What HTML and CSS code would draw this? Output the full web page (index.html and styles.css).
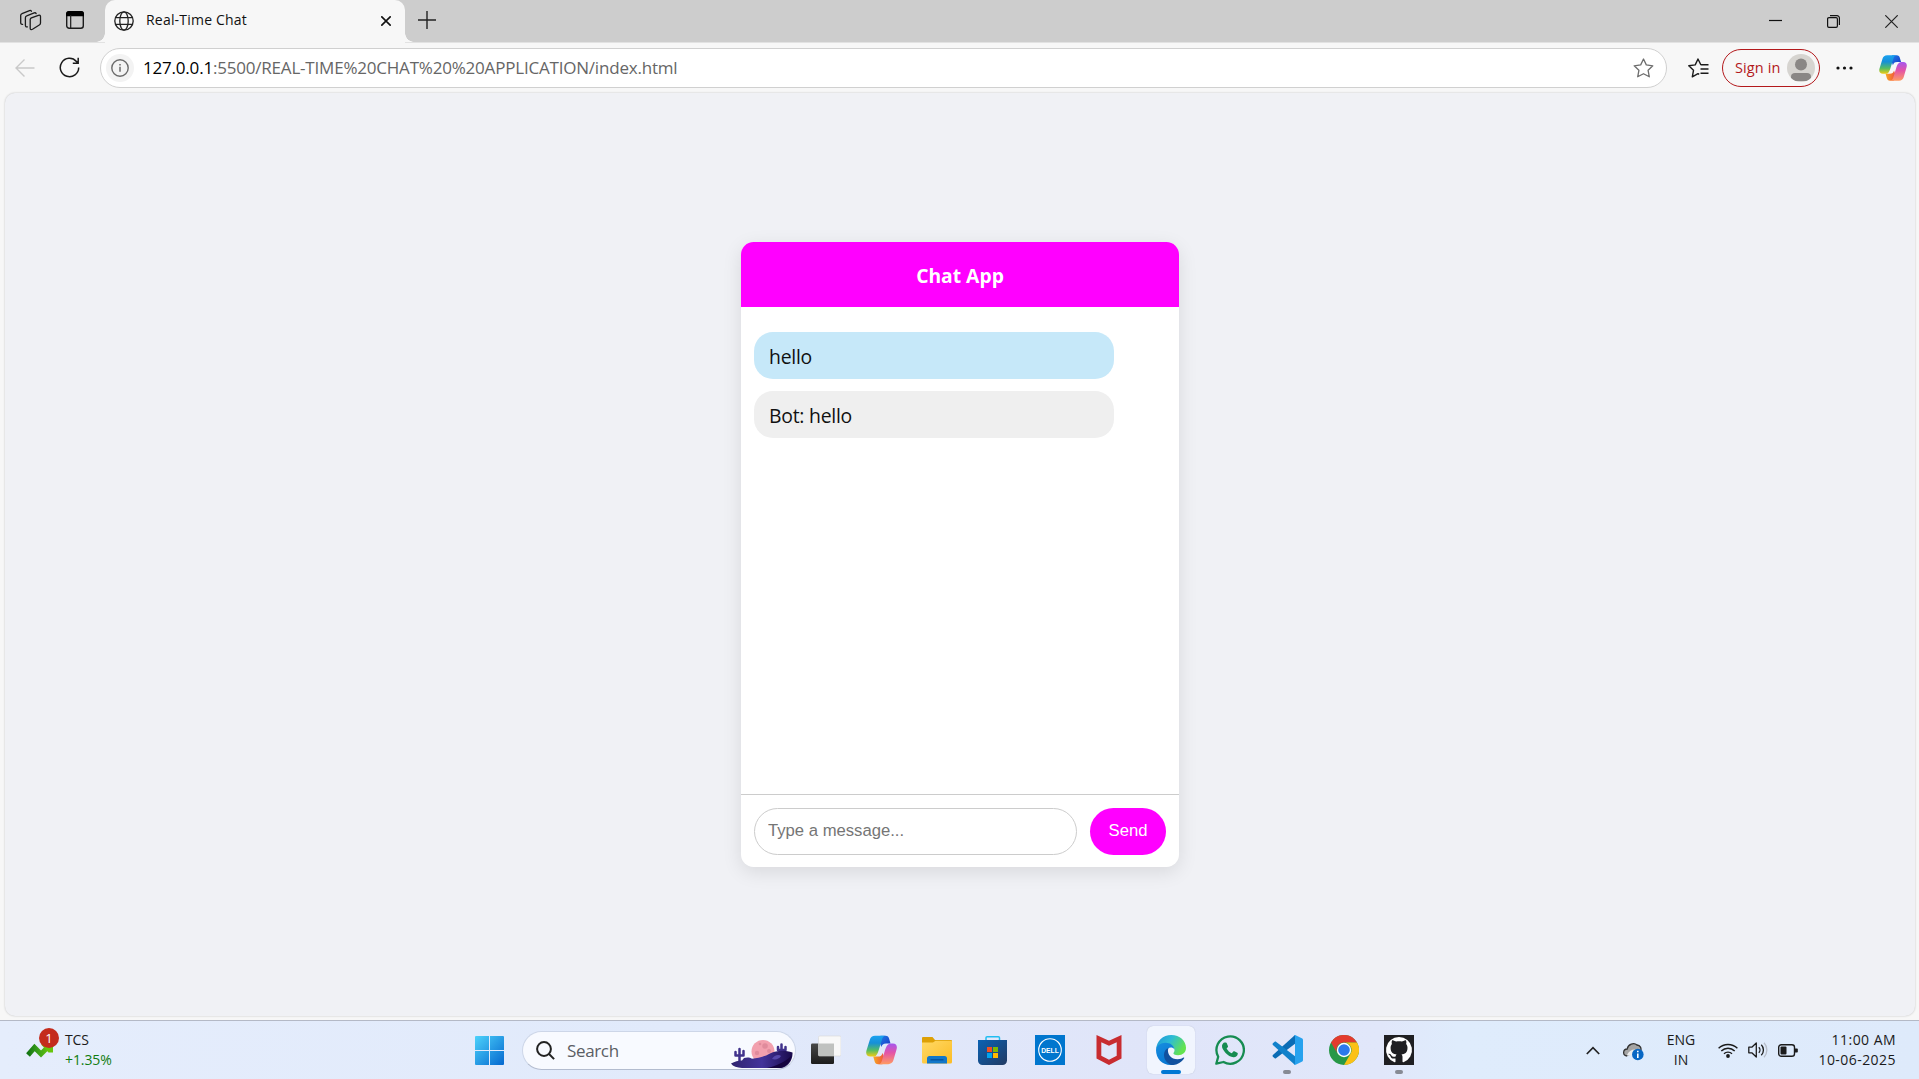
FILE: index.html
```html
<!DOCTYPE html>
<html lang="en">
<head>
<meta charset="utf-8">
<title>Real-Time Chat</title>
<link rel="stylesheet" href="styles.css">
</head>
<body>
<svg class="defs" width="0" height="0" aria-hidden="true">
  <defs>
    <linearGradient id="cpA" x1="0" y1="0" x2="0" y2="1"><stop offset="0" stop-color="#1aa2f0"/><stop offset=".35" stop-color="#168fd8"/><stop offset=".7" stop-color="#55bd63"/><stop offset="1" stop-color="#f2cb12"/></linearGradient>
    <linearGradient id="cpB" x1="0" y1="0" x2="0" y2="1"><stop offset="0" stop-color="#a456ef"/><stop offset=".45" stop-color="#e353a8"/><stop offset="1" stop-color="#ff9b63"/></linearGradient>
    <linearGradient id="cpC" x1="0" y1="0" x2="1" y2="1"><stop offset="0" stop-color="#1d7fe8"/><stop offset="1" stop-color="#1b35c4"/></linearGradient>
    <linearGradient id="cpD" x1="0" y1="0" x2="1" y2="0"><stop offset="0" stop-color="#f7a823"/><stop offset="1" stop-color="#f0503f"/></linearGradient>
    <symbol id="copilot" viewBox="0 0 30 28">
      <path fill="url(#cpC)" d="M14 .3h5c2 0 2.900 1.100 3.400 2.900l1.300 4.400h-4.200c-3 0-3.900 1.300-4.600 3.500L13 6z"/>
      <path fill="url(#cpD)" d="M7 20.300h4.500c2.700 0 3.900-1.200 4.600-3.500L18 22l-2.200 5.700h-4c-2 0-3-1.200-3.500-2.900z"/>
      <path fill="url(#cpA)" d="M8.700.3H19c-2.100.2-2.900 1.500-3.600 3.800l-2.900 9.300c-.8 2.600-2.100 6.900-4.800 6.900H4.200c-3 0-4.700-2.200-3.800-5.500L3.700 4C4.400 1.600 6.100.3 8.700.3z"/>
      <path fill="url(#cpB)" d="M21.500 27.700H11.800c2.200-.1 3-1.500 3.700-3.900l2.800-9.200c.8-2.700 2.200-7 5.700-7h2.100c3 0 4.400 2.300 3.500 5.600L26.500 24c-.8 2.400-2.500 3.700-5 3.700z"/>
    </symbol>
    <linearGradient id="win" x1="0" y1="0" x2="1" y2="1"><stop offset="0" stop-color="#4cd2fb"/><stop offset="1" stop-color="#0568cf"/></linearGradient>
    <linearGradient id="fold" x1="0" y1="0" x2="1" y2="1"><stop offset="0" stop-color="#ffd966"/><stop offset="1" stop-color="#fcbc24"/></linearGradient>
    <linearGradient id="store" x1="0" y1="0" x2="1" y2="1"><stop offset="0" stop-color="#0a62b4"/><stop offset="1" stop-color="#223a63"/></linearGradient>
    <linearGradient id="edgeTop" x1="0" y1="0" x2="1" y2=".45"><stop offset="0" stop-color="#1c93d8"/><stop offset=".5" stop-color="#2dbcd5"/><stop offset="1" stop-color="#63e34f"/></linearGradient>
    <linearGradient id="edgeMid" x1="0" y1="0" x2=".6" y2="1"><stop offset="0" stop-color="#168ee0"/><stop offset="1" stop-color="#0875d0"/></linearGradient>
    <linearGradient id="dark" x1="0" y1="0" x2="0" y2="1"><stop offset="0" stop-color="#484848"/><stop offset="1" stop-color="#1c1c1c"/></linearGradient>
    <linearGradient id="hill" x1="0" y1="0" x2="1" y2="0"><stop offset="0" stop-color="#30246f"/><stop offset=".5" stop-color="#43339b"/><stop offset="1" stop-color="#1a0b4c"/></linearGradient>
    <linearGradient id="trend" x1="0" y1="0" x2="1" y2="0"><stop offset="0" stop-color="#137512"/><stop offset=".5" stop-color="#3da31a"/><stop offset="1" stop-color="#67c50c"/></linearGradient>
  </defs>
</svg>

<header class="titlebar">
  <div class="title-tools">
    <svg class="ico-work" width="22" height="22" viewBox="0 0 22 22" fill="none" stroke="#1b1b1b" stroke-width="1.300" stroke-linejoin="round" stroke-linecap="round"><path d="M10.200 10.500c.1-.8.500-1.300 1.200-1.600l7-2.600c1.300-.4 2.100.2 2.100 1.300v6.500c0 .9-.4 1.500-1.200 1.900l-6.800 4.300c-1.400.8-2.300.1-2.300-1.100z"/><path d="M7.400 17.900c-1.200.3-2-.4-2-1.600V8.700c0-1 .4-1.600 1.300-1.900l7.500-2.900c.9-.3 1.600 0 1.900.7"/><path d="M2.600 15.300c-1.200.3-1.900-.4-1.900-1.500V6.500c0-1 .4-1.600 1.300-1.900l7.500-3c.9-.3 1.600 0 1.900.6"/></svg>
    <svg class="ico-tabs" width="18" height="18" viewBox="0 0 18 18"><rect x=".7" y=".7" width="16.600" height="16.600" rx="2.500" fill="none" stroke="#1b1b1b" stroke-width="1.400"/><path d="M0 3a3 3 0 0 1 3-3h12a3 3 0 0 1 3 3v2.200H0z"/><path d="M4.700 4v13" stroke="#1b1b1b" stroke-width="1.200"/></svg>
  </div>
  <div class="tab">
    <svg width="20" height="20" viewBox="0 0 20 20" fill="none" stroke="#222" stroke-width="1.300"><circle cx="10" cy="10" r="9.200"/><ellipse cx="10" cy="10" rx="4.200" ry="9.200"/><path d="M1.500 6.600h17M1.500 13.400h17"/></svg>
    <span class="tab-title">Real-Time Chat</span>
    <svg width="10" height="10" viewBox="0 0 10 10" stroke="#111" stroke-width="1.600"><path d="M.3.3l9.400 9.400M9.700.3L.3 9.700"/></svg>
  </div>
  <svg class="new-tab" width="18" height="18" viewBox="0 0 18 18" stroke="#222" stroke-width="1.400"><path d="M9 0v18M0 9h18"/></svg>
  <div class="window-buttons">
    <svg width="13" height="13" viewBox="0 0 13 13"><path d="M0 5.500h13" stroke="#111" stroke-width="1.200"/></svg>
    <svg width="13" height="13" viewBox="0 0 13 13" fill="none" stroke="#111" stroke-width="1.200"><rect x=".6" y="2.600" width="9.800" height="9.800" rx="1.300"/><path d="M3 .6h7A2.400 2.400 0 0 1 12.400 3v7"/></svg>
    <svg width="13" height="13" viewBox="0 0 13 13" stroke="#222" stroke-width="1.200"><path d="M.3.3l12.400 12.400M12.700.3L.3 12.700"/></svg>
  </div>
</header>

<nav class="toolbar">
  <svg class="back" width="20" height="18" viewBox="0 0 20 18" fill="none" stroke="#c9c9c9" stroke-width="1.400"><path d="M19.500 9H1M9.500.5L1 9l8.500 8.500"/></svg>
  <svg class="reload" width="21" height="21" viewBox="0 0 21 21" fill="none" stroke="#1b1b1b" stroke-width="1.500"><path d="M19.700 10.500a9.200 9.200 0 1 1-2.300-6.100l1.500 1.500M19.200.8v5.400h-5.400"/></svg>
  <div class="address">
    <span class="site-info"><svg width="18" height="18" viewBox="0 0 18 18"><circle cx="9" cy="9" r="8.200" fill="none" stroke="#6b6b6b" stroke-width="1.400"/><path d="M9 7.800v5M9 5v1.600" stroke="#6b6b6b" stroke-width="1.500"/></svg></span>
    <span class="url"><b class="host">127.0.0.1</b>:5500/REAL-TIME%20CHAT%20%20APPLICATION/index.html</span>
    <svg class="star" width="21" height="20" viewBox="0 0 21 20" fill="none" stroke="#6d6d6d" stroke-width="1.300" stroke-linejoin="round"><path d="M10.500 1l2.800 5.900 6.500.9-4.700 4.500 1.200 6.500-5.800-3.100-5.800 3.100 1.200-6.500L1.200 7.800l6.500-.9z"/></svg>
  </div>
  <svg class="favorites" width="21" height="20" viewBox="0 0 21 20" fill="none" stroke="#1b1b1b" stroke-width="1.400" stroke-linejoin="round"><path d="M13.500 6.700L12.700 6.500 10 1 7.200 6.900l-6.400.9 4.700 4.500-1.200 6.500L10 15.700l1.200.7M13 6.700h7.500M12.500 11h8M12.500 15.300h8"/></svg>
  <div class="sign-in"><span>Sign in</span>
    <svg width="28" height="28" viewBox="0 0 28 28"><clipPath id="av"><circle cx="14" cy="14" r="14"/></clipPath><g clip-path="url(#av)"><path fill="#d6d4d0" d="M0 0h28v28H0z"/><circle cx="14" cy="10.500" r="6" fill="#8a8785"/><path d="M4 27v-4c0-3 1.500-4 4-4h12c2.500 0 4 1 4 4v4z" fill="#8a8785"/></g></svg>
  </div>
  <svg class="more" width="17" height="4" viewBox="0 0 17 4" fill="#111"><circle cx="2" cy="2" r="1.600"/><circle cx="8.500" cy="2" r="1.600"/><circle cx="15" cy="2" r="1.600"/></svg>
  <svg class="copilot-side" width="28" height="26"><use href="#copilot"/></svg>
</nav>

<div class="stage">
  <main class="viewport">
    <section class="chat">
      <h1 class="chat-header">Chat App</h1>
      <div class="messages">
        <div class="message user">hello</div>
        <div class="message bot">Bot: hello</div>
      </div>
      <form class="composer">
        <input type="text" placeholder="Type a message...">
        <button type="button">Send</button>
      </form>
    </section>
  </main>
</div>

<footer class="taskbar">
  <div class="widget">
    <div class="trend">
      <svg width="28" height="18" viewBox="0 0 28 18"><path d="M2 14l6.500-7.500 6.500 6.500 8.500-8.500" fill="none" stroke="url(#trend)" stroke-width="5"/><path d="M15 3.500L25.800 1c.9-.1 1.200.2 1.200 1v9.500h-4.500z" fill="#67c50c"/></svg>
      <span class="badge">1</span>
    </div>
    <div class="stock"><span>TCS</span><span class="gain">+1.35%</span></div>
  </div>

  <svg class="start" width="29" height="29" viewBox="0 0 29 29" fill="url(#win)"><path d="M1 0h13v14H0V1a1 1 0 0 1 1-1zM15 0h13a1 1 0 0 1 1 1v13H15zM0 15h14v14H1a1 1 0 0 1-1-1zM15 15h14v13a1 1 0 0 1-1 1H15z"/></svg>

  <div class="search">
    <svg width="19" height="19" viewBox="0 0 19 19" fill="none" stroke="#222" stroke-width="2"><circle cx="8" cy="8" r="6.900"/><path d="M12.800 12.800l5.300 5.300"/></svg>
    <span>Search</span>
    <svg class="desert" width="62" height="30" viewBox="0 0 62 30">
      <circle cx="32" cy="12.500" r="11.500" fill="#f2a0ae"/><circle cx="34" cy="7" r="2.800" fill="#e08b9c"/><circle cx="26" cy="14" r="2.200" fill="#e08b9c"/><circle cx="38" cy="12" r="2" fill="#e08b9c"/><circle cx="29" cy="5" r="1.300" fill="#e08b9c"/>
      <path d="M8.500 22V10M4.500 13v3.500h8V12M50.500 14V5.500M47 8v3h7.500V8" fill="none" stroke="#40328c" stroke-width="2.500" stroke-linecap="round" stroke-linejoin="round"/>
      <path d="M0 24.500c4-2 7-3 11-3l2-2.500c3-1 6-.7 8 .8 8-1 13-2.500 18-5.300 7-3.500 15-3.500 22.500-1 .5 8-5 14.500-11.500 15.500H11c-5-.4-9-1.500-11-4.500z" fill="url(#hill)"/>
      <path d="M41 20c2-4 7-5 9-3-2 3-5 4-9 3z" fill="#5548ab"/><path d="M36 29c9-2 18-6 24-12 0 6-5 11-11 12z" fill="#15043f"/>
    </svg>
  </div>

  <div class="apps">
    <div class="app"><svg width="30" height="30" viewBox="0 0 30 30"><rect x="0" y="8.500" width="23" height="20.500" rx="1.200" fill="url(#dark)"/><rect x="7.500" y="1" width="22.500" height="20" rx="1.200" fill="#f8f8f8" stroke="#d6d6d6" stroke-width=".6"/><path d="M7.500 8.500H23V21H8.500a1 1 0 0 1-1-1z" fill="#bfc1bf"/></svg></div>
    <div class="app"><svg width="31" height="30"><use href="#copilot"/></svg></div>
    <div class="app"><svg width="30" height="30" viewBox="0 0 30 30"><path d="M1 2h9.500l2.500 3h16a1 1 0 0 1 1 1v4H0V3a1 1 0 0 1 1-1z" fill="#dda006"/><path d="M0 7.500h11l2.500-1.800H29a1 1 0 0 1 1 1V27a1.500 1.500 0 0 1-1.500 1.500h-27A1.500 1.500 0 0 1 0 27z" fill="url(#fold)"/><path d="M5 28.500V23.500a2.500 2.500 0 0 1 2.500-2.500h15a2.500 2.500 0 0 1 2.500 2.500v5z" fill="#1277c9"/><path d="M8.500 24.800h13" stroke="#06509b" stroke-width="1.300"/></svg></div>
    <div class="app"><svg width="30" height="30" viewBox="0 0 30 30"><path d="M8 7V2.800c0-.7.400-1.100 1.100-1.100h11.300c.7 0 1.100.4 1.100 1.100V7" fill="none" stroke="#21bdf1" stroke-width="1.500"/><path d="M0 5h29v20.500a4.500 4.500 0 0 1-4.500 4.500h-20A4.500 4.500 0 0 1 0 25.500z" fill="url(#store)"/><path d="M9 12h5v5H9z" fill="#f25022"/><path d="M15 12h5v5h-5z" fill="#7fba00"/><path d="M9 18h5v5H9z" fill="#00a4ef"/><path d="M15 18h5v5h-5z" fill="#ffb900"/></svg></div>
    <div class="app"><svg width="30" height="30" viewBox="0 0 30 30"><path fill="#0076ce" d="M0 0h30v30H0z"/><circle cx="15" cy="15" r="11.300" fill="none" stroke="#fff" stroke-width="1.100"/><text x="15" y="17.600" text-anchor="middle" textLength="17.500" lengthAdjust="spacingAndGlyphs" class="dell">DELL</text></svg></div>
    <div class="app"><svg width="28" height="30" viewBox="0 0 28 30"><path fill="#c82c30" fill-rule="evenodd" d="M1.500 0L14 5.700 26.500 0v23.500L14 30 1.500 23.500zM6.300 7.200V20.800L14 24.700l7.700-3.900V7.200L14 10.800z"/></svg></div>
    <div class="app active"><svg width="30" height="30" viewBox="0 0 32 32"><path fill="url(#edgeTop)" d="M0 15.800C.5 6.400 7.500 0 16.300 0 25.500 0 32 6.500 32 13.500c0 5-3.600 8-8.500 8-3.500 0-5.300-1.200-4.900-2.300.9-1.400 1.300-2.400 1.100-3.600-.5-3.800-4-6.200-8.200-6.200C6.500 9.400 2 11.500 0 15.800z"/><path fill="url(#edgeMid)" d="M0 16c.3-4.500 5-7.700 10.300-7.700 5 0 9 3 9.400 7.100C17.500 12.300 12 12.800 11 17.500c-1 6 5 12 11 12.500-2 1.300-4.200 2-6.500 2C6.500 32 0 25 0 16z"/><path fill="#11519f" d="M13.400 13.500c-2 4.200.4 12.400 9.600 12.400 3 0 5.200-1 6.400-1.800.5-.2.900.2.600.7C27 29.500 22 32.300 16.500 32 11 30 8 25 8.600 20c.4-3.200 2.300-5.600 4.800-6.500z"/></svg></div>
    <div class="app"><svg width="30" height="30" viewBox="0 0 30 30"><path d="M1.300 28.700l1.900-7A13.700 13.700 0 1 1 8.500 27z" fill="none" stroke="#168c51" stroke-width="2.300" stroke-linejoin="round"/><path fill="#168c51" d="M10.800 7.500c.5 0 .8.200 1 .7l1.200 3c.1.400 0 .8-.3 1.100l-1.100 1.300c1.300 2.300 3 3.800 5.200 4.700l1.500-1.700c.3-.4.700-.5 1.100-.3l2.900 1.400c.5.300.6.500.5 1-.3 2.400-2.200 3.700-4.400 3.500-2.700-.2-5.700-2-7.800-4.300-2.200-2.400-3.700-4.800-3.600-6.900.1-1.500 1.200-3.500 2.700-3.500z"/></svg></div>
    <div class="app running"><svg width="31" height="30" viewBox="0 0 31 30"><path fill="#0b6cb5" d="M23 0v8.800L4 23.300c-.4.300-.9.300-1.300 0L.9 21.700c-.5-.5-.5-1.200 0-1.700z"/><path fill="#1081cb" d="M23 30v-8.800L4 6.700c-.4-.3-.9-.3-1.300 0L.9 8.300c-.5.500-.5 1.200 0 1.700z"/><path fill="#27a2ee" d="M22 .7c.4-.7 1-.8 1.600-.5l6.200 3c.8.400 1.200.9 1.200 1.800v20c0 .9-.4 1.400-1.200 1.800l-6.200 3c-.6.300-1.200.2-1.600-.5.6.2 1-.3 1-1V1.700c0-.7-.4-1.200-1-1z"/></svg></div>
    <div class="app"><svg width="30" height="30" viewBox="0 0 30 30"><circle cx="15" cy="15" r="15" fill="#279847"/><path fill="#e33b2e" d="M2 7.500a15 15 0 0 1 26 0H15a7.500 7.500 0 0 0-6.500 11.300z"/><path fill="#fbc116" d="M28 7.500A15 15 0 0 1 15 30l6.500-11.200A7.500 7.500 0 0 0 15 7.500z"/><circle cx="15" cy="15" r="7.200" fill="#fff"/><circle cx="15" cy="15" r="5.800" fill="#2c79ed"/></svg></div>
    <div class="app running"><svg width="30" height="30" viewBox="0 0 30 30"><path fill="#1f1f22" d="M0 0h30v30H0z"/><path fill="#fff" d="M15 2a13 13 0 0 0-4.500 25.200c.8.100 1-.4 1-.8v-3c-3.600.8-4.500-1-4.800-1.700-.3-.7-1-1.600-1.600-1.900-.6-.3-1.200-1 0-1 1.200 0 2 1.100 2.400 1.600 1.100 1.700 3 1.500 4.100 1 .1-.8.500-1.400 1-1.800-3.200-.4-6-1.600-6-6.800 0-1.500.5-2.700 1.400-3.700-.3-.5-.6-2 .1-3.900 0 0 1.400-.2 4 1.400 2-.5 3.900-.5 5.800 0 2.700-1.600 4-1.400 4-1.400.8 1.900.4 3.400.2 3.900.9 1 1.400 2.200 1.400 3.700 0 5.200-2.800 6.400-6 6.800.6.500 1 1.300 1 2.500v4.300c0 .4.300.9 1 .8A13 13 0 0 0 15 2z"/></svg></div>
  </div>

  <div class="tray">
    <svg class="chevron" width="14" height="9" viewBox="0 0 14 9" fill="none" stroke="#222" stroke-width="1.700"><path d="M.8 8L7 1.700 13.200 8"/></svg>
    <svg class="cloud" width="21" height="19" viewBox="0 0 21 19"><path d="M4.200 14C-.8 13.700-.3 7 4.200 7 5 2 11 .200 14 3c3.500.3 4.500 3.500 3.800 6" fill="#a5a5a5" stroke="#333" stroke-width="1.300"/><path d="M4 13c2-5 8-7 13-4l-5 4.500z" fill="#ececec"/><circle cx="14.800" cy="12.500" r="5.800" fill="#0867c4"/><path d="M14.800 11.500v4.500M14.800 8.800v1.500" stroke="#fff" stroke-width="1.600"/></svg>
    <div class="lang"><span>ENG</span><span>IN</span></div>
    <svg class="wifi" width="20" height="15" viewBox="0 0 20 15" fill="none" stroke="#1b1b1b" stroke-width="1.400"><path d="M.6 5.300a13.500 13.500 0 0 1 18.800 0M3.300 8a9.600 9.600 0 0 1 13.400 0M6 10.700a5.800 5.800 0 0 1 8 0"/><circle cx="10" cy="13" r="1.900" fill="#1b1b1b" stroke="none"/></svg>
    <svg class="sound" width="20" height="16" viewBox="0 0 20 16" fill="none" stroke="#1b1b1b" stroke-width="1.300" stroke-linejoin="round"><path d="M.8 5.200h3L8.300 1v14l-4.500-4.200h-3zM10.800 5.200a4 4 0 0 1 0 5.600M13.300 2.800a7.400 7.400 0 0 1 0 10.400"/><path d="M16 .8a10.500 10.500 0 0 1 0 14.400" stroke="#b7bdc8"/></svg>
    <svg class="battery" width="20" height="13" viewBox="0 0 20 13"><rect x=".7" y=".7" width="15.800" height="11.600" rx="2.600" fill="none" stroke="#1b1b1b" stroke-width="1.400"/><rect x="2.500" y="2.500" width="6" height="8" rx="1" fill="#1b1b1b"/><path d="M17 4.500h1.800c.6 0 1 .4 1 1v2c0 .6-.4 1-1 1H17z" fill="#1b1b1b"/></svg>
    <div class="clock"><span>11:00 AM</span><span>10-06-2025</span></div>
  </div>
</footer>
</body>
</html>
```
FILE: styles.css
```css
* { box-sizing: border-box; }
html, body { height: 100%; overflow: hidden; }
body {
  margin: 0;
  display: flex;
  flex-direction: column;
  background: #f7f7f7;
  color: #1b1b1b;
  font-family: "Open Sans", "Noto Sans", sans-serif;
}
svg { display: block; flex: none; }
.defs { position: absolute; }
span { white-space: nowrap; }

/* Tab strip */
.titlebar {
  display: flex;
  height: 43px;
  flex: none;
  background: #cdcdcd;
  border-bottom: 1px solid #e2e2e2;
}
.title-tools { display: flex; width: 105px; padding-left: 20px; }
.ico-work { margin-top: 9px; }
.ico-tabs { margin: 11px 0 0 24px; }
.tab {
  position: relative;
  display: flex;
  width: 300px;
  height: 43px;
  padding: 0 14px 2px 9px;
  align-items: center;
  background: #f7f7f7;
  border-radius: 10px 10px 0 0;
}
.tab::before, .tab::after {
  content: "";
  position: absolute;
  bottom: 1px;
  width: 9px;
  height: 9px;
}
.tab::before { left: -9px; background: radial-gradient(circle at 0 0, transparent 8.500px, #f7f7f7 9px); }
.tab::after { right: -9px; background: radial-gradient(circle at 100% 0, transparent 8.500px, #f7f7f7 9px); }
.tab-title { flex: 1; margin-left: 12px; padding-bottom: 2px; font-size: 14px; letter-spacing: .2px; color: #111; }
.new-tab { margin: 11px 0 0 13px; }
.window-buttons { display: flex; gap: 45px; margin: 15px 21px 0 auto; }

/* Address row */
.toolbar { display: flex; height: 49px; flex: none; align-items: center; padding: 0 12px 0 15px; }
.back { margin-right: 24px; }
.reload { margin-right: 20px; }
.address {
  display: flex;
  align-items: center;
  width: 1567px;
  height: 40px;
  padding: 0 12px 0 5px;
  background: #fff;
  border: 1px solid #d0d0d0;
  border-radius: 20px;
}
.site-info { display: grid; place-items: center; width: 28px; height: 28px; border-radius: 50%; background: #f3f3f3; }
.url { flex: 1; margin-left: 9px; font-size: 17px; letter-spacing: -.2px; color: #666; }
.host { color: #000; font-weight: 400; }
.favorites { margin-left: 21px; }
.sign-in {
  display: flex;
  justify-content: space-between;
  align-items: center;
  width: 98px;
  height: 38px;
  margin-left: 13px;
  padding: 0 4px 0 12px;
  border: 1px solid #b3191c;
  border-radius: 19px;
  color: #b3191c;
  font-size: 14.500px;
  letter-spacing: .1px;
}
.more { margin-left: 16px; }
.copilot-side { margin-left: 26px; }

/* Web page area */
.stage { height: 928px; flex: none; padding: 1px 4px 4px 5px; }
.viewport {
  display: grid;
  place-items: center;
  height: 923px;
  background: #f0f1f5;
  border-radius: 10px;
  box-shadow: 0 0 2px #bbb;
}
.chat {
  display: flex;
  flex-direction: column;
  width: 438px;
  height: 625px;
  overflow: hidden;
  background: #fff;
  border-radius: 12.500px;
  box-shadow: 0 5px 19px rgba(0, 0, 0, .1);
}
.chat-header {
  height: 65px;
  margin: 0;
  background: #f0f;
  color: #fff;
  font-size: 19.300px;
  font-weight: 700;
  line-height: 68px;
  text-align: center;
}
.messages { display: flex; flex: 1; flex-direction: column; gap: 12px; padding: 25px 13px; }
.message { width: 360px; height: 47px; padding-left: 15px; border-radius: 19px; color: #111; font-size: 19.400px; letter-spacing: -.25px; line-height: 50px; }
.user { background: #c6e8f9; }
.bot { background: #efefef; }
.composer { display: flex; gap: 13px; height: 73px; padding: 13px 13px 12px; border-top: 1px solid #ccc; }
.composer input, .composer button { font-family: "Liberation Sans", Arial, sans-serif; font-size: 16.670px; border-radius: 25px; }
.composer input { flex: 1; min-width: 0; height: 47px; padding: 0 13px 2px; border: 1px solid #ccc; outline: 0; background: #fff; }
.composer input::placeholder { color: #757575; }
.composer button { width: 76px; height: 47px; padding: 0 0 2px; border: 0; background: #f0f; color: #fff; }

/* Taskbar */
.taskbar {
  display: flex;
  height: 59px;
  flex: none;
  border-top: 1px solid #b4b9c6;
  background: linear-gradient(90deg, #e5edfc 0, #e1eafb 35%, #e0e5f9 60%, #e1e7fa 72%, #dfecfc 76%, #deeafb 100%);
}
.widget { display: flex; width: 475px; padding: 7px 0 0 26px; }
.trend { position: relative; width: 38px; padding-top: 13px; }
.badge {
  position: absolute;
  left: 13px;
  top: 0;
  width: 20px;
  height: 20px;
  border-radius: 50%;
  background: #c42b1c;
  color: #fff;
  font-size: 13px;
  line-height: 20px;
  text-align: center;
}
.stock { display: flex; flex-direction: column; font-size: 14px; line-height: 20px; letter-spacing: -.1px; padding: 2px 0 0 1px; }
.gain { color: #107c10; }
.start { margin-top: 15px; }
.search {
  display: flex;
  width: 274px;
  height: 39px;
  margin: 10px 0 0 18px;
  padding: 0 2px 0 13px;
  align-items: center;
  border: 1px solid #cdd6e8;
  border-bottom-color: #b3bccf;
  border-radius: 20px;
  background: #f8faff;
  color: #5b5e64;
  font-size: 17px;
  letter-spacing: -.35px;
}
.search span { flex: 1; margin-left: 12px; }
.desert { margin-top: 6px; }
.apps { display: grid; grid-template-columns: 55px 56px 56px 57px 60px 61px 59px 57px 57px 55px 31px; margin-left: 15px; padding-top: 14px; }
.app { position: relative; width: 30px; height: 40px; }
.active::before {
  content: "";
  position: absolute;
  inset: -9px -9px auto -9px;
  height: 48px;
  border-radius: 6px;
  background: #f1f5fe;
  box-shadow: 0 0 1px #aab3c8;
}
.active svg { position: relative; }
.active::after, .running::after { content: ""; position: absolute; bottom: 1px; border-radius: 2px; }
.active::after { left: 5px; width: 20px; height: 4px; background: #0078d4; }
.running::after { left: 11px; width: 8px; height: 4px; background: #868a94; }
.dell { fill: #fff; font: 700 7px "Liberation Sans", Arial, sans-serif; }
.tray { display: flex; margin-left: auto; padding-right: 23px; }
.chevron { margin-top: 25px; }
.cloud { margin: 21px 0 0 23px; }
.lang { display: flex; flex-direction: column; width: 32px; margin: 9px 1px 0 21px; align-items: center; font-size: 14px; line-height: 20px; letter-spacing: 0; }
.wifi { margin: 22px 0 0 20px; }
.sound { margin: 21px 0 0 10px; }
.battery { margin: 23px 0 0 10px; }
.clock { display: flex; flex-direction: column; width: 78px; margin: 9px 0 0 20px; align-items: flex-end; font-size: 14px; line-height: 20px; letter-spacing: .45px; }
```
